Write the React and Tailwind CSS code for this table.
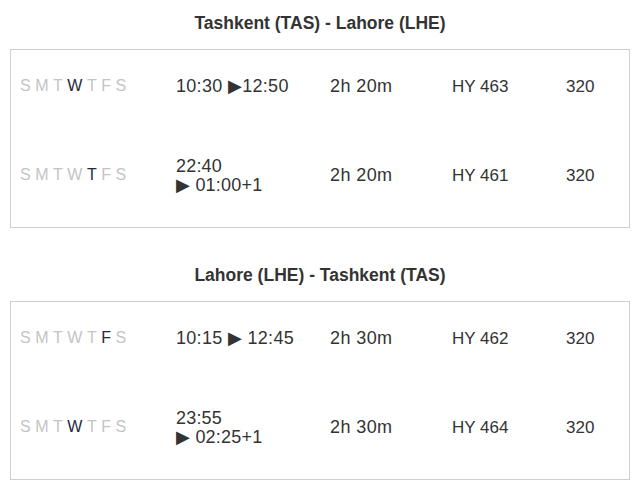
import React from "react";

const DAYS = ["S", "M", "T", "W", "T", "F", "S"];

const sections = [
  {
    title: "Tashkent (TAS) - Lahore (LHE)",
    rows: [
      { day: 3, dep: "10:30", arr: "12:50", wrap: false, tight: true, dur: "2h 20m", fl: "HY 463", ac: "320" },
      { day: 4, dep: "22:40", arr: "01:00+1", wrap: true, dur: "2h 20m", fl: "HY 461", ac: "320" },
    ],
  },
  {
    title: "Lahore (LHE) - Tashkent (TAS)",
    rows: [
      { day: 5, dep: "10:15", arr: "12:45", wrap: false, dur: "2h 30m", fl: "HY 462", ac: "320" },
      { day: 3, dep: "23:55", arr: "02:25+1", wrap: true, dur: "2h 30m", fl: "HY 464", ac: "320" },
    ],
  },
];

function Row({ r, first }) {
  return (
    <div className={`grid grid-cols-[156px_154px_122px_114px_1fr] items-center pl-[9px] ${first ? "h-[88px] pb-[16px]" : "h-[89px] pb-[15px]"}`}>
      <div className="flex gap-[4.5px] text-[16px] leading-none">
        {DAYS.map((d, i) => (
          <span key={i} className={i === r.day ? "text-[#25293d]" : "text-[#c4c4c4]"}>
            {d}
          </span>
        ))}
      </div>
      {r.wrap ? (
        <div className="text-[18px] leading-[19px] tracking-[0.2px] text-[#333] pt-[2px]">
          <div>{r.dep}</div>
          <div>{"\u25B6"} {r.arr}</div>
        </div>
      ) : (
        <div className="text-[18px] leading-none tracking-[0.3px] text-[#333]">
          {r.dep} {"\u25B6"}{r.tight ? "" : " "}{r.arr}
        </div>
      )}
      <div className="text-[18px] leading-none tracking-[0.4px] text-[#333]">{r.dur}</div>
      <div className="text-[17px] leading-none text-[#333]">{r.fl}</div>
      <div className="text-[17px] leading-none text-[#333]">{r.ac}</div>
    </div>
  );
}

export default function App() {
  return (
    <div className="w-[640px] h-[496px] bg-white px-[10px] font-['Liberation_Sans',Arial,sans-serif]">
      {sections.map((s, si) => (
        <div key={si} className={si === 1 ? "mt-[24px]" : ""}>
          <div className="h-[49px] flex items-center justify-center pb-[2px] text-[17.5px] font-bold text-[#333]">
            {s.title}
          </div>
          <div className="border border-[#cfcfcf] w-[620px]">
            {s.rows.map((r, ri) => (
              <Row key={ri} r={r} first={ri === 0} />
            ))}
          </div>
        </div>
      ))}
    </div>
  );
}
